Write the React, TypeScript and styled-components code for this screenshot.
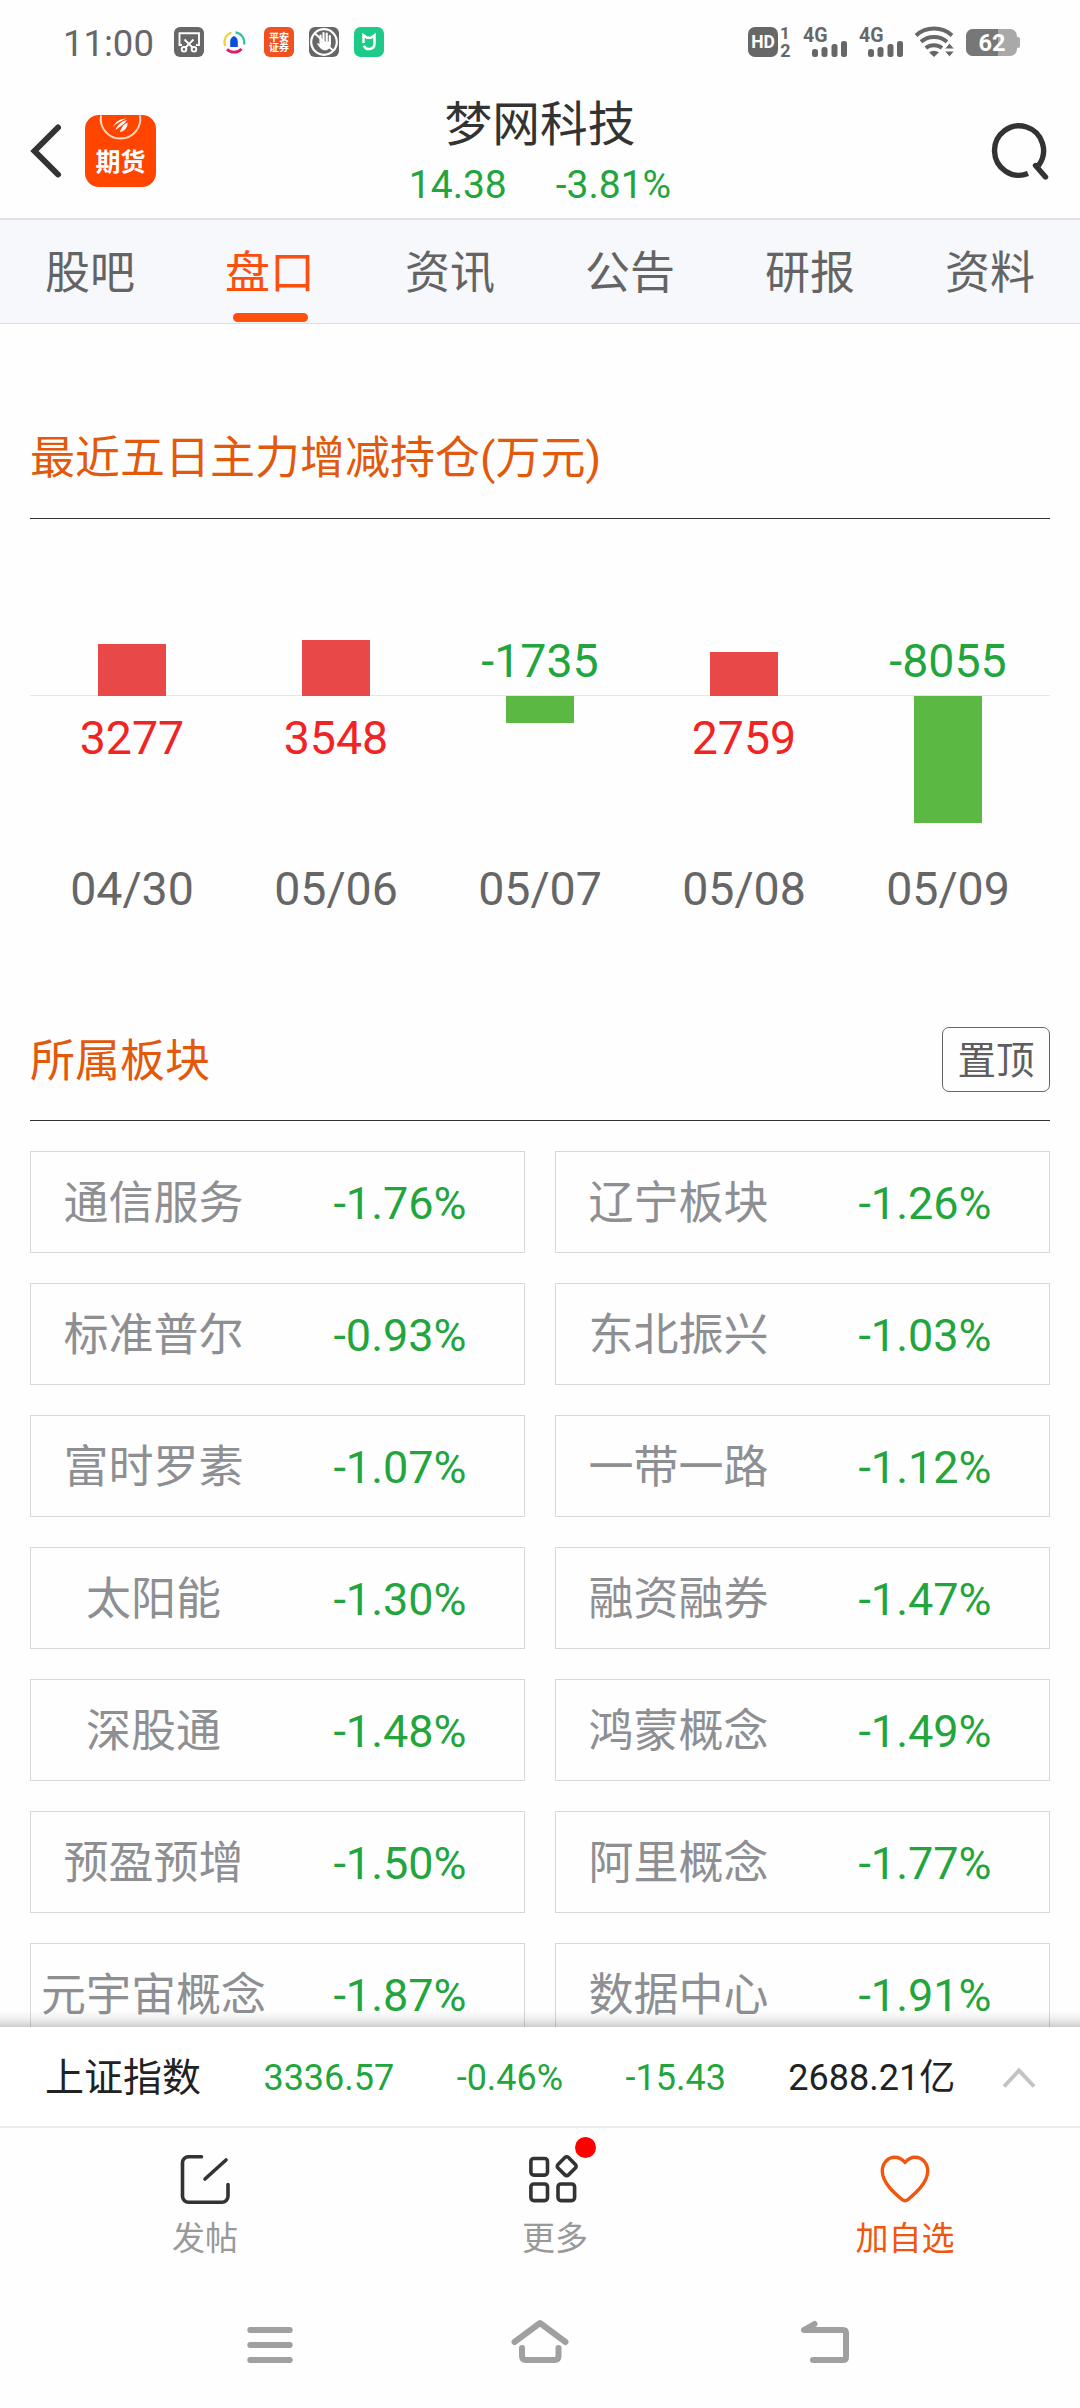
import React from "react";
import styled, { createGlobalStyle } from "styled-components";

const GREEN = "#22a53c";
const RED = "#f02424";
const ORANGE = "#fc4f0d";

const Global = createGlobalStyle`
  * { box-sizing: border-box; }
  body { margin: 0; background: #fefefe; }
`;

const Screen = styled.div`
  width: 1080px;
  height: 2408px;
  display: flex;
  flex-direction: column;
  overflow: hidden;
  background: #fefefe;
  font-family: Roboto, "Noto Sans CJK SC", sans-serif;
  color: #333;
`;

const StatusBar = styled.header`
  flex: none;
  height: 84px;
  padding: 0 60px 0 63px;
  display: flex;
  align-items: center;
  justify-content: space-between;
`;

const StatusGroup = styled.div<{ $gap: number }>`
  display: flex;
  align-items: center;
  gap: ${(p) => p.$gap}px;
`;

const Clock = styled.span`
  width: 96px;
  padding-top: 3px;
  font-size: 36.5px;
  line-height: 40px;
  color: #676767;
`;

const AppBar = styled.div`
  flex: none;
  height: 134px;
  display: flex;
  align-items: center;
  justify-content: space-between;
  padding: 0 30px;
`;

const AppBarSide = styled.div<{ $end?: boolean }>`
  width: 130px;
  display: flex;
  justify-content: ${(p) => (p.$end ? "flex-end" : "flex-start")};
  align-items: center;
  gap: 23px;
`;

const TitleBlock = styled.div`
  display: flex;
  flex-direction: column;
  align-items: center;
  gap: 8px;
  padding-top: 1px;
`;

const Title = styled.h1`
  margin: 0;
  font-size: 47.7px;
  line-height: 58px;
  font-weight: 400;
`;

const Quote = styled.div`
  display: flex;
  gap: 49px;
  font-size: 39px;
  line-height: 46px;
  color: ${GREEN};
`;

const Tabs = styled.nav`
  flex: none;
  height: 106px;
  display: flex;
  background: #f7f8fb;
  border-top: 2px solid #dfe0e1;
  border-bottom: 1px solid #dadcdd;
`;

const Tab = styled.div<{ $active?: boolean }>`
  width: 180px;
  display: flex;
  flex-direction: column;
  align-items: center;
  justify-content: space-between;
  padding: 24px 0 1px;
  font-size: 45px;
  line-height: 60px;
  color: ${(p) => (p.$active ? ORANGE : "#646464")};
  &::after {
    content: "";
    width: 75px;
    height: 9px;
    border-radius: 5px;
    background: ${(p) => (p.$active ? "#ff500b" : "transparent")};
  }
`;

const Content = styled.main`
  flex: none;
  height: 1703px;
  padding: 0 30px;
  overflow: hidden;
`;

const SectionHead = styled.div<{ $height: number; $bottom: number }>`
  height: ${(p) => p.$height}px;
  padding-bottom: ${(p) => p.$bottom}px;
  display: flex;
  align-items: flex-end;
  justify-content: space-between;
  border-bottom: 1px solid #333;
`;

const SectionTitle = styled.h2`
  margin: 0;
  font-size: 45px;
  line-height: 60px;
  font-weight: 400;
  color: #e2590c;
`;

const PinButton = styled.button`
  width: 108px;
  height: 65px;
  margin: 0;
  padding: 2px 0 0;
  border: 1px solid #666;
  border-radius: 7px;
  background: none;
  font: inherit;
  font-size: 38.5px;
  line-height: 60px;
  color: #5e5e5e;
`;

const Chart = styled.div`
  display: grid;
  grid-template-columns: repeat(5, 1fr);
`;

const Day = styled.div`
  display: flex;
  flex-direction: column;
  align-items: center;
`;

const Half = styled.div<{ $upper?: boolean; $label?: boolean }>`
  width: 100%;
  height: ${(p) => (p.$upper ? 177 : 165)}px;
  display: flex;
  flex-direction: column;
  align-items: center;
  justify-content: ${(p) => (p.$upper ? "flex-end" : "flex-start")};
  padding: ${(p) => (p.$label ? (p.$upper ? "0 0 6px" : "14px 0 0") : "0")};
  border-bottom: ${(p) => (p.$upper ? "1px solid #e6e6e6" : "none")};
`;

const Bar = styled.div<{ $up: boolean }>`
  width: 68px;
  flex: none;
  background: ${(p) => (p.$up ? "#e84848" : "#5bb943")};
  margin-bottom: ${(p) => (p.$up ? -1 : 0)}px;
`;

const Amount = styled.span<{ $up: boolean }>`
  font-size: 46.5px;
  line-height: 56px;
  color: ${(p) => (p.$up ? RED : GREEN)};
`;

const DateLabel = styled.span`
  font-size: 46.5px;
  line-height: 56px;
  color: #666;
`;

const Sectors = styled.div`
  display: grid;
  grid-template-columns: 1fr 1fr;
  grid-auto-rows: 102px;
  gap: 30px;
  padding-top: 30px;
`;

const Sector = styled.div`
  display: grid;
  grid-template-columns: 1fr 1fr;
  align-items: center;
  padding: 3px 1px 0 0;
  text-align: center;
  border: 1px solid #d6d8d9;
  font-size: 45px;
  line-height: 60px;
  white-space: nowrap;
`;

const SectorName = styled.span`
  padding-right: 1px;
  color: #8e8f93;
`;

const SectorChange = styled.span`
  color: ${GREEN};
`;

const IndexBar = styled.div`
  flex: none;
  position: relative;
  height: 101px;
  padding: 2px 0 0 45px;
  display: flex;
  align-items: center;
  gap: 62.400px;
  background: #fff;
  border-bottom: 2px solid #ececec;
  font-size: 36px;
  line-height: 50px;
  white-space: nowrap;
  color: ${GREEN};
  &::before {
    content: "";
    position: absolute;
    left: 0;
    right: 0;
    bottom: 100%;
    height: 16px;
    background: linear-gradient(to top, rgba(0, 0, 0, 0.19), rgba(0, 0, 0, 0.06) 50%, transparent);
  }
`;

const IndexName = styled.span`
  font-size: 39px;
  color: #222;
`;

const Turnover = styled.span`
  margin-right: -16px;
  color: #222;
`;

const Actions = styled.div`
  flex: none;
  height: 152px;
  padding-left: 30px;
  display: flex;
`;

const Action = styled.div<{ $primary?: boolean }>`
  width: 350px;
  padding-top: 22px;
  display: flex;
  flex-direction: column;
  align-items: center;
  gap: 8px;
  font-size: 33px;
  line-height: 46px;
  color: ${(p) => (p.$primary ? "#f0560f" : "#999")};
`;

const IconWrap = styled.div`
  position: relative;
  height: 58px;
`;

const Dot = styled.i`
  position: absolute;
  top: -13px;
  right: -16px;
  width: 21px;
  height: 21px;
  border-radius: 50%;
  background: #fe0000;
`;

const SystemNav = styled.footer`
  flex: none;
  height: 128px;
  padding-top: 32px;
  display: flex;
  justify-content: center;
  gap: 210px;
`;

const Icon = styled.svg`
  display: block;
  flex: none;
  overflow: visible;
`;

const SvgText = styled.text`
  font-family: Roboto, "Noto Sans CJK SC", sans-serif;
  font-weight: 700;
`;

const SnipIcon = () => (
  <Icon width="30" height="30" viewBox="0 0 30 30" fill="none" stroke="#fff" strokeWidth="1.9">
    <rect width="30" height="30" rx="6" fill="#676767" stroke="none" />
    <path d="M8 18H5.5V6.2h19.5V18H22" />
    <path d="M10.5 12.5L18.8 20.8M19.5 12.5L11.2 20.8" />
    <circle cx="10" cy="22.3" r="2.3" />
    <circle cx="20" cy="22.3" r="2.3" />
  </Icon>
);

const RingIcon = () => (
  <Icon width="30" height="30" viewBox="0 0 30 30" fill="none" strokeWidth="2.2">
    <path d="M12.5 5.5A10 10 0 0 0 6.3 19" stroke="#f3ce3e" />
    <path d="M16.5 5.3A10 10 0 0 1 25 17.5" stroke="#35c3a2" />
    <path d="M8 22.2A10 10 0 0 0 22.5 22" stroke="#df1d66" strokeWidth="2.8" />
    <path d="M15 9c2.500 1 3.800 3.300 3.800 5.500V20h-7.600v-5.500C11.200 12.300 12.500 10 15 9z" fill="#0b4fd6" />
  </Icon>
);

const SecuritiesIcon = () => (
  <Icon width="30" height="30" viewBox="0 0 30 30">
    <rect width="30" height="30" rx="6" fill="#ef5122" />
    <SvgText x="15" y="14" fontSize="10" fill="#fff" textAnchor="middle">平安</SvgText>
    <SvgText x="15" y="23.500" fontSize="10" fill="#fff" textAnchor="middle">证券</SvgText>
  </Icon>
);

const HandIcon = () => (
  <Icon width="30" height="30" viewBox="0 0 30 30" fill="none" stroke="#fff">
    <rect width="30" height="30" rx="6" fill="#676767" stroke="none" />
    <circle cx="15" cy="15" r="12.800" strokeWidth="2.200" />
    <path d="M11.500 14.500V8.500M14.500 14V6M17.700 14V6.500M20.800 15V9" strokeWidth="2.200" strokeLinecap="round" />
    <path d="M10.300 14.500h11.700c.4 4.500-1.500 8.300-5 8.800-4 .5-6.200-2.500-9-6.500 1.200-.9 2-.4 2.800.6z" fill="#fff" stroke="none" />
    <path d="M6 6.500L24 23.500" strokeWidth="1.800" />
  </Icon>
);

const MijiaIcon = () => (
  <Icon width="30" height="30" viewBox="0 0 30 30">
    <rect width="30" height="30" rx="6.500" fill="#1dca87" />
    <path d="M9.500 16V8.300L13 10.800h4L20.500 8.300V16.500a5.500 5.300 0 0 1-10.600 2.200" fill="none" stroke="#fff" strokeWidth="2.500" />
  </Icon>
);

const HdIcon = () => (
  <Icon width="43" height="30" viewBox="0 0 43 30">
    <rect width="30" height="30" rx="7" fill="#676767" />
    <SvgText x="15" y="21.300" fontSize="17.500" fill="#fff" textAnchor="middle">HD</SvgText>
    <SvgText x="37" y="12.300" fontSize="17" fill="#676767" textAnchor="middle">1</SvgText>
    <SvgText x="37.500" y="30" fontSize="18" fill="#676767" textAnchor="middle">2</SvgText>
  </Icon>
);

const SignalIcon = () => (
  <Icon width="44" height="30" viewBox="0 0 44 30">
    <SvgText x="0" y="14.500" fontSize="19.500" fill="#676767">4G</SvgText>
    <g fill="#676767">
      <rect x="9" y="22" width="6" height="8" rx="2.500" />
      <rect x="18.500" y="20" width="6" height="10" rx="2.500" />
      <rect x="28.500" y="17" width="6" height="13" rx="2.500" />
      <rect x="38" y="14" width="6" height="16" rx="2.500" />
    </g>
  </Icon>
);

const WifiIcon = () => (
  <Icon width="39" height="30" viewBox="0 0 39 30" fill="none" stroke="#676767" strokeWidth="4">
    <path d="M1 8.500A27 27 0 0 1 37 8.500" />
    <path d="M6 14.800A20 20 0 0 1 32 14.800" />
    <path d="M10.800 21A13 13 0 0 1 27 21" />
    <path d="M14 25.200q5-3 10 0L19 30z" fill="#676767" stroke="none" />
    <path d="M34.500 16l5 6h-10zM34.500 30l5-6h-10z" fill="#676767" stroke="#fefefe" strokeWidth="1" />
  </Icon>
);

const BatteryIcon = () => (
  <Icon width="54" height="27" viewBox="0 0 54 27">
    <rect width="51" height="27" rx="7" fill="#a9a9a9" />
    <rect x="50" y="8" width="4" height="11" rx="2" fill="#a9a9a9" />
    <path d="M32 0H7a7 7 0 0 0-7 7v13a7 7 0 0 0 7 7h25z" fill="#777" />
    <SvgText x="26" y="22" fontSize="23.500" fill="#fff" textAnchor="middle">62</SvgText>
  </Icon>
);

const BackIcon = () => (
  <Icon width="32" height="54" viewBox="0 0 32 54" fill="none" stroke="#333" strokeWidth="6" strokeLinecap="round">
    <path d="M28 3.500L4.500 27L28 50.500" strokeLinejoin="miter" />
  </Icon>
);

const FuturesIcon = () => (
  <Icon width="71" height="72" viewBox="0 0 71 72">
    <rect width="71" height="72" rx="14" fill="#ff4500" />
    <path d="M16 .5A19.700 19.700 0 0 0 35.500 23.500A19.700 19.700 0 0 0 55 .5" fill="none" stroke="#ffd9c8" strokeWidth="2" />
    <path d="M28 12C30 7 35 4 41 3.500C37 6 31 8 28 12zM30.500 15C32 10 37 6 42 5C39.500 9 36 11 30.500 15zM35 17C36 13 39 9 42.500 7.500C43 12 40 16 35 17z" fill="#fff" />
    <SvgText x="35.500" y="56" fontSize="25" fill="#fff" textAnchor="middle">期货</SvgText>
  </Icon>
);

const SearchIcon = () => (
  <Icon width="60" height="58" viewBox="0 0 60 58" fill="none" stroke="#333" strokeWidth="5.400">
    <path d="M38 51.500A24.500 24.700 0 1 1 48.500 43.500" />
    <path d="M45.500 43.500L55.500 55" strokeLinecap="round" />
  </Icon>
);

const ChevronUp = () => (
  <Icon width="34" height="22" viewBox="0 0 34 22" fill="none" stroke="#c3c3c3" strokeWidth="4">
    <path d="M2 19.500L17 3.500L32 19.500" />
  </Icon>
);

const PostIcon = () => (
  <Icon width="50" height="58" viewBox="0 0 50 58" fill="none" stroke="#333" strokeWidth="3.600" strokeLinecap="round">
    <path d="M21.500 6.800H8.500a6 6 0 0 0-6 6V46.200a6 6 0 0 0 6 6H42a6 6 0 0 0 6-6V34.500" />
    <path d="M25 29L46 10" />
  </Icon>
);

const MoreIcon = () => (
  <Icon width="50" height="58" viewBox="0 0 50 58" fill="none" stroke="#333" strokeWidth="3.600">
    <rect x="0.900" y="8.500" width="16.600" height="16.600" rx="3" />
    <rect x="0.900" y="34" width="16.600" height="16.600" rx="3" />
    <rect x="28" y="34" width="16.600" height="16.600" rx="3" />
    <rect x="29.300" y="8.800" width="14.800" height="14.800" rx="2.500" transform="rotate(45 36.700 16.200)" />
  </Icon>
);

const HeartIcon = () => (
  <Icon width="50" height="58" viewBox="0 0 50 58" fill="none" stroke="#f0560f" strokeWidth="3.400" strokeLinejoin="round">
    <path d="M25 12.500C21.500 8.500 18.500 7.300 15 7.300C7.500 7.300 2.300 13.500 2.300 21C2.300 33 15 43.500 22 49.500Q25 52 28 49.500C35 43.500 47.700 33 47.700 21C47.700 13.500 42.500 7.300 35 7.300C31.500 7.300 28.500 8.500 25 12.500z" />
  </Icon>
);

const NavIcon = ({ d }: { d: string }) => (
  <Icon width="60" height="46" viewBox="0 0 60 46" fill="none" stroke="#a0a0a0" strokeWidth="6" strokeLinecap="round" strokeLinejoin="round">
    <path d={d} />
  </Icon>
);

const tabs = ["股吧", "盘口", "资讯", "公告", "研报", "资料"];

const flows = [
  { date: "04/30", value: 3277 },
  { date: "05/06", value: 3548 },
  { date: "05/07", value: -1735 },
  { date: "05/08", value: 2759 },
  { date: "05/09", value: -8055 },
];

const sectors: [string, string][] = [
  ["通信服务", "-1.76%"],
  ["辽宁板块", "-1.26%"],
  ["标准普尔", "-0.93%"],
  ["东北振兴", "-1.03%"],
  ["富时罗素", "-1.07%"],
  ["一带一路", "-1.12%"],
  ["太阳能", "-1.30%"],
  ["融资融券", "-1.47%"],
  ["深股通", "-1.48%"],
  ["鸿蒙概念", "-1.49%"],
  ["预盈预增", "-1.50%"],
  ["阿里概念", "-1.77%"],
  ["元宇宙概念", "-1.87%"],
  ["数据中心", "-1.91%"],
];

const barHeight = (value: number) => Math.round((Math.abs(value) * 127) / 8055);

export default function App() {
  return (
    <Screen>
      <Global />
      <StatusBar>
        <StatusGroup $gap={15}>
          <Clock>11:00</Clock>
          <SnipIcon />
          <RingIcon />
          <SecuritiesIcon />
          <HandIcon />
          <MijiaIcon />
        </StatusGroup>
        <StatusGroup $gap={12}>
          <HdIcon />
          <SignalIcon />
          <SignalIcon />
          <WifiIcon />
          <BatteryIcon />
        </StatusGroup>
      </StatusBar>

      <AppBar>
        <AppBarSide>
          <BackIcon />
          <FuturesIcon />
        </AppBarSide>
        <TitleBlock>
          <Title>梦网科技</Title>
          <Quote>
            <span>14.38</span>
            <span>-3.81%</span>
          </Quote>
        </TitleBlock>
        <AppBarSide $end>
          <SearchIcon />
        </AppBarSide>
      </AppBar>

      <Tabs>
        {tabs.map((t) => (
          <Tab key={t} $active={t === "盘口"}>
            {t}
          </Tab>
        ))}
      </Tabs>

      <Content>
        <SectionHead $height={195} $bottom={29}>
          <SectionTitle>最近五日主力增减持仓(万元)</SectionTitle>
        </SectionHead>
        <Chart>
          {flows.map(({ date, value }) => {
            const up = value > 0;
            const bar = <Bar $up={up} style={{ height: barHeight(value) }} />;
            const label = <Amount $up={up}>{value}</Amount>;
            return (
              <Day key={date}>
                <Half $upper $label={!up}>{up ? bar : label}</Half>
                <Half $label={up}>{up ? label : bar}</Half>
                <DateLabel>{date}</DateLabel>
              </Day>
            );
          })}
        </Chart>
        <SectionHead $height={204} $bottom={28}>
          <SectionTitle>所属板块</SectionTitle>
          <PinButton>置顶</PinButton>
        </SectionHead>
        <Sectors>
          {sectors.map(([name, change]) => (
            <Sector key={name}>
              <SectorName>{name}</SectorName>
              <SectorChange>{change}</SectorChange>
            </Sector>
          ))}
        </Sectors>
      </Content>

      <IndexBar>
        <IndexName>上证指数</IndexName>
        <span>3336.57</span>
        <span>-0.46%</span>
        <span>-15.43</span>
        <Turnover>2688.21亿</Turnover>
        <ChevronUp />
      </IndexBar>

      <Actions>
        <Action>
          <IconWrap>
            <PostIcon />
          </IconWrap>
          发帖
        </Action>
        <Action>
          <IconWrap>
            <MoreIcon />
            <Dot />
          </IconWrap>
          更多
        </Action>
        <Action $primary>
          <IconWrap>
            <HeartIcon />
          </IconWrap>
          加自选
        </Action>
      </Actions>

      <SystemNav>
        <NavIcon d="M10.300 18H49.700M10.300 33H49.700M10.300 48H49.700" />
        <NavIcon d="M4.500 30L30 11L55.500 30M12 36V44Q12 48 16 48H44.500Q48.500 48 48.500 44V36" />
        <NavIcon d="M34.500 12L24 18H63Q66 18 66 21V45Q66 48 63 48H33" />
      </SystemNav>
    </Screen>
  );
}
